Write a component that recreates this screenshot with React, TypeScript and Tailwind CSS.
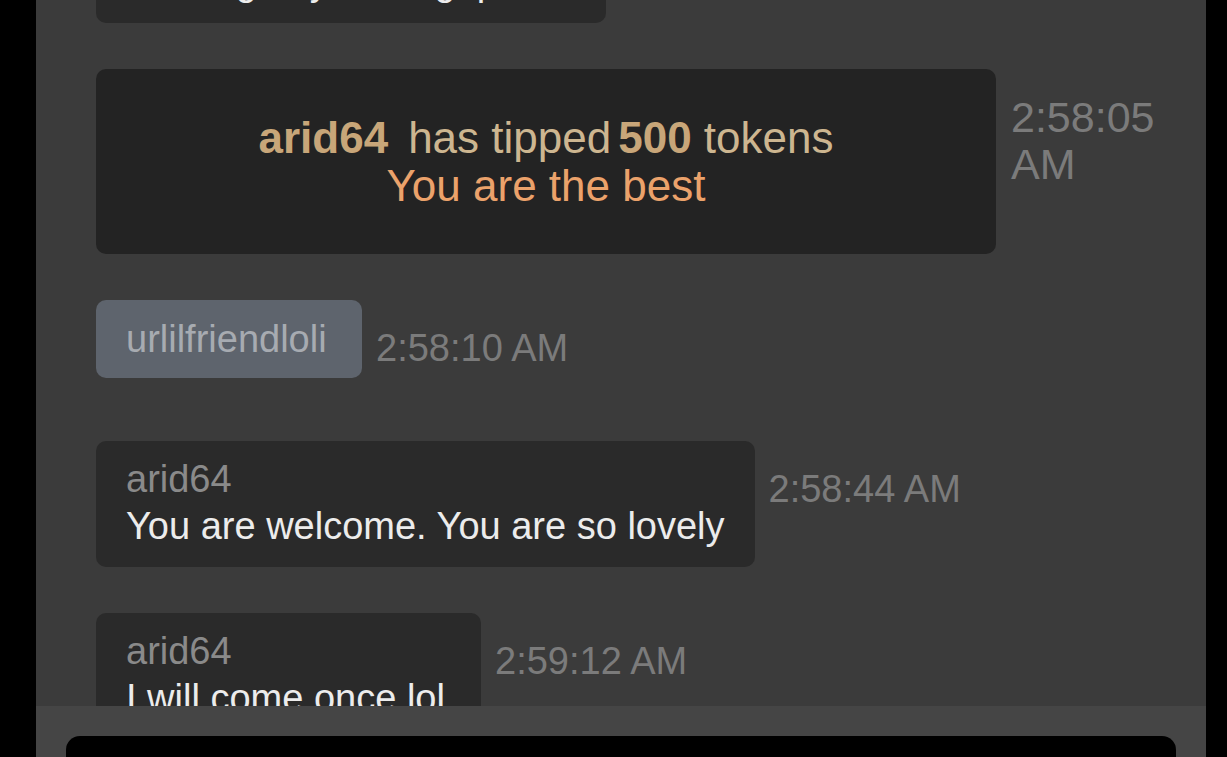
import React from "react";

const font = { fontFamily: '"Liberation Sans", Arial, Helvetica, sans-serif' };

function Stamp({ children }: { children: React.ReactNode }) {
  return (
    <div className="min-w-0 pt-[28px] pb-[27px] text-[38px] leading-[40px] text-[#7b7b7b]">
      {children}
    </div>
  );
}

function MsgRow({
  name,
  text,
  time,
  width,
}: {
  name: string;
  text: string;
  time: string;
  width?: string;
}) {
  return (
    <div className="flex items-start gap-[14px]">
      <div
        className={
          "shrink-0 overflow-hidden rounded-[10px] bg-[#2a2a2a] px-[30px] pt-[15px] pb-[17px] " +
          (width ?? "")
        }
      >
        <div className="text-[38px] leading-[47px] text-[#8a8a8a]">{name}</div>
        <div className="whitespace-nowrap text-[38px] leading-[47px] text-[#ececec]">{text}</div>
      </div>
      <Stamp>{time}</Stamp>
    </div>
  );
}

export default function App() {
  return (
    <div className="flex h-[757px] w-full overflow-hidden bg-black" style={font}>
      <div className="ml-[36px] flex h-full w-[1170px] flex-col bg-[#3b3b3b]">
        <div className="min-h-0 flex-1 overflow-hidden">
          <div className="mt-[-103px] flex flex-col gap-[46px] pl-[60px] pr-[50px]">
            <MsgRow
              name="arid64"
              text="Nothing beyond a gap at all"
              time="2:57:58 AM"
              width="w-[510px]"
            />

            <div className="flex items-start gap-[15px]">
              <div className="flex h-[185px] w-[900px] shrink-0 flex-col items-center justify-center rounded-[10px] bg-[#232323] text-[44px] leading-[48px]">
                <div className="whitespace-nowrap text-[#cdb690]">
                  <span className="font-bold text-[#c8a679]">arid64</span>
                  <span className="ml-[20px]">has tipped</span>
                  <span className="ml-[7px] font-bold text-[#c8a679]">500</span>
                  <span> tokens</span>
                </div>
                <div className="whitespace-nowrap text-[#eba26b]">You are the best</div>
              </div>
              <div className="min-w-0 pt-[25px] text-[43px] leading-[47px] text-[#7b7b7b]">
                2:58:05 AM
              </div>
            </div>

            <div className="flex items-start gap-[14px]">
              <div className="flex h-[78px] w-[266px] shrink-0 items-center rounded-[10px] bg-[#5e646d] pl-[30px] text-[38px] leading-[47px] text-[#a7abb1]">
                urlilfriendloli
              </div>
              <Stamp>2:58:10 AM</Stamp>
            </div>

            <MsgRow name="arid64" text="You are welcome. You are so lovely" time="2:58:44 AM" />
            <MsgRow name="arid64" text="I will come once lol" time="2:59:12 AM" width="w-[385px]" />
          </div>
        </div>
        <div className="h-[51px] shrink-0 overflow-hidden bg-[#454545] px-[30px] pt-[30px]">
          <div className="h-[40px] rounded-[14px] bg-black" />
        </div>
      </div>
    </div>
  );
}
